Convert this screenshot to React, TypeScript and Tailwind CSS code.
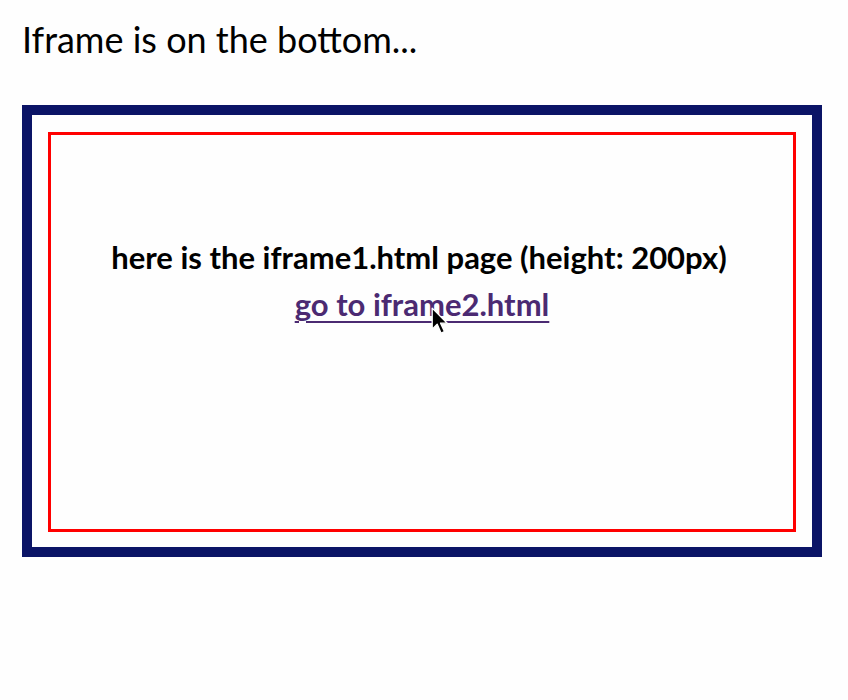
import React from "react";

function Cursor() {
  return (
    <svg
      className="absolute left-[380px] top-[172px]"
      width="18"
      height="29"
      viewBox="0 0 16 26"
    >
      <path
        d="M1 1 L1 20 L5.5 15.5 L9 23.5 L12 22 L8.5 14.5 L14.5 14.5 Z"
        fill="#000"
        stroke="#fff"
        strokeWidth="1.2"
        strokeLinejoin="round"
      />
    </svg>
  );
}

export default function App() {
  return (
    <div className="min-h-[700px] w-[848px] bg-[#fefefe] font-['Lato',sans-serif] text-black">
      <div className="px-[22px] pt-[18px]">
        <h1 className="text-[36px] leading-[42px] font-normal">
          Iframe is on the bottom...
        </h1>
        <div className="mt-[45px] w-[800px] h-[452px] border-[10px] border-[#0b1466] p-4 pt-[17px]">
          <div className="relative h-[400px] border-[3px] border-[#ff0000] flex flex-col items-center pt-[100px]">
            <p className="pr-[6px] text-[31px] leading-[44px] font-bold">
              here is the iframe1.html page (height: 200px)
            </p>
            <a
              href="#"
              className="mt-[3px] text-[31px] leading-[44px] font-bold text-[#4b2a72] underline underline-offset-[5px] decoration-2"
            >
              go to iframe2.html
            </a>
            <Cursor />
          </div>
        </div>
      </div>
    </div>
  );
}
